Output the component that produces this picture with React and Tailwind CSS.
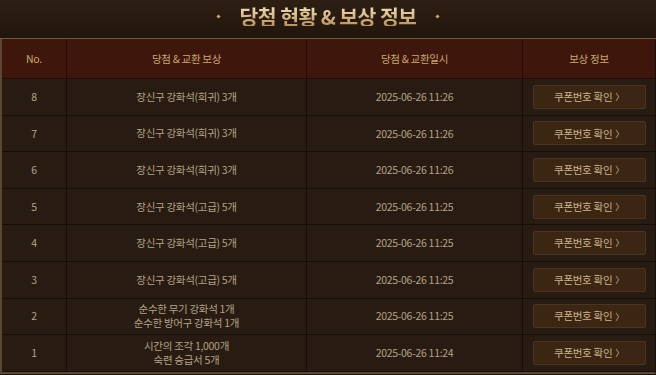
import React from 'react';

const rows = [
  { no: 8, reward: ['장신구 강화석(희귀) 3개'], date: '2025-06-26 11:26' },
  { no: 7, reward: ['장신구 강화석(희귀) 3개'], date: '2025-06-26 11:26' },
  { no: 6, reward: ['장신구 강화석(희귀) 3개'], date: '2025-06-26 11:26' },
  { no: 5, reward: ['장신구 강화석(고급) 5개'], date: '2025-06-26 11:25' },
  { no: 4, reward: ['장신구 강화석(고급) 5개'], date: '2025-06-26 11:25' },
  { no: 3, reward: ['장신구 강화석(고급) 5개'], date: '2025-06-26 11:25' },
  { no: 2, reward: ['순수한 무기 강화석 1개', '순수한 방어구 강화석 1개'], date: '2025-06-26 11:25' },
  { no: 1, reward: ['시간의 조각 1,000개', '숙련 승급서 5개'], date: '2025-06-26 11:24' },
];

const cols = 'grid grid-cols-[65px_240px_216px_1fr]';

export default function App() {
  return (
    <div className="w-[656px] h-[375px] overflow-hidden bg-[#22170e] font-['Noto_Sans_CJK_KR','Noto_Sans',sans-serif]">
      {/* title band */}
      <div className="h-[39px] flex items-center justify-center gap-[20px] bg-gradient-to-b from-[#2e1f14] via-[#281a10] to-[#21150c] border-b border-[#6b5a40] pb-[6px]">
        <span className="w-[3px] h-[3px] rotate-45 bg-[#c9a86a]" />
        <h1 className="text-[20.5px] font-bold tracking-[-0.6px] leading-none bg-gradient-to-b from-[#f3e2b6] to-[#b8925a] bg-clip-text text-transparent">
          당첨 현황 &amp; 보상 정보
        </h1>
        <span className="w-[3px] h-[3px] rotate-45 bg-[#c9a86a]" />
      </div>

      <div className="border-l-2 border-r border-b-2 border-l-[#5a4832] border-r-[#1a100a] border-b-[#5a4832]">
        {/* header */}
        <div className={`${cols} h-[40px] bg-[#3e160c] border-b border-[#1c0e08] text-[10.5px] tracking-[-0.3px] text-[#caa86c]`}>
          <div className="flex items-center justify-center border-r border-[#270c06]">No.</div>
          <div className="flex items-center justify-center border-r border-[#270c06]">당첨 &amp; 교환 보상</div>
          <div className="flex items-center justify-center border-r border-[#270c06]">당첨 &amp; 교환일시</div>
          <div className="flex items-center justify-center">보상 정보</div>
        </div>

        {rows.map((r) => (
          <div
            key={r.no}
            className={`${cols} h-[36.6px] bg-[#281c12] border-b border-[#150e09] text-[10.5px] tracking-[-0.3px] text-[#b3a287]`}
          >
            <div className="flex items-center justify-center border-r border-[#150e09]">{r.no}</div>
            <div className="flex flex-col items-center justify-center leading-[14px] border-r border-[#150e09]">
              {r.reward.map((t) => (
                <span key={t}>{t}</span>
              ))}
            </div>
            <div className="flex items-center justify-center border-r border-[#150e09]">{r.date}</div>
            <div className="flex items-center justify-center">
              <button className="w-[113px] h-[24px] rounded-[2px] bg-[#3a2613] border border-[#4b3520] text-[10.5px] text-[#cdb48c] flex items-center justify-center gap-[3px]">
                쿠폰번호 확인 <span className="text-[9px]">〉</span>
              </button>
            </div>
          </div>
        ))}
      </div>
    </div>
  );
}
